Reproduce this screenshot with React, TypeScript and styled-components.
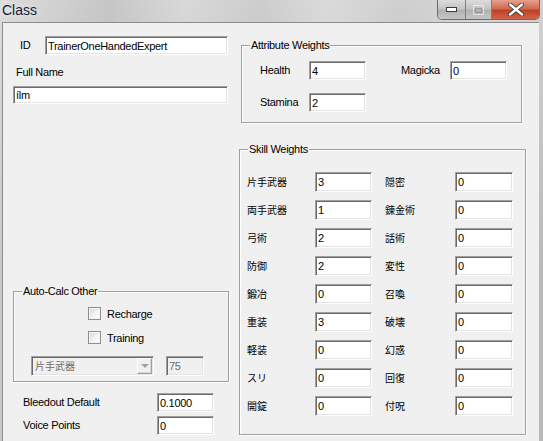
import { Fragment } from 'react'
import styled, { createGlobalStyle } from 'styled-components'

const GlobalStyle = createGlobalStyle`
  html, body {
    margin: 0;
    padding: 0;
    overflow: hidden;
    background: #f0f0f0;
  }
  body {
    font-family: 'Liberation Sans', 'Noto Sans CJK JP', sans-serif;
    font-size: 11px;
    color: #000;
  }
`

const Window = styled.div`
  width: 543px;
  height: 441px;
  display: flex;
  flex-direction: column;
  overflow: hidden;
  background:
    linear-gradient(180deg, rgba(255, 255, 255, 0.35) 0%, rgba(255, 255, 255, 0) 60%),
    linear-gradient(
      90deg,
      #c9c9c9 0%,
      #bdbdbd 8%,
      #a9a9a9 20%,
      #c4c4c4 34%,
      #b3b3b3 48%,
      #c7c7c7 60%,
      #b6b6b6 74%,
      #c2c2c2 88%,
      #b9b9b9 100%
    );
`

const TitleBar = styled.div`
  height: 22px;
  display: flex;
  justify-content: space-between;
  align-items: flex-start;
`

const Title = styled.div`
  padding: 2px 0 0 2px;
  font-size: 14px;
  line-height: 17px;
  color: #10203a;
  text-shadow: 0 0 6px rgba(255, 255, 255, 0.9);
`

const Controls = styled.div`
  display: flex;
  margin-right: 3px;
  height: 19px;
  border: 1px solid #6a6a6a;
  border-top: none;
  border-radius: 0 0 5px 5px;
  overflow: hidden;
`

const CtrlButton = styled.div<{ $w: number; $close?: boolean }>`
  width: ${({ $w }) => $w}px;
  display: flex;
  align-items: center;
  justify-content: center;
  background: ${({ $close }) =>
    $close
      ? 'linear-gradient(180deg, #e6a08e 0%, #d06a53 45%, #bf4029 55%, #cf6448 100%)'
      : 'linear-gradient(180deg, #dcdcdc 0%, #c4c4c4 45%, #b0b0b0 55%, #c6c6c6 100%)'};

  & + & {
    border-left: 1px solid #7e7e7e;
  }
`

const Body = styled.div`
  flex: 1;
  display: flex;
  padding: 0 4px 0 2px;
  min-height: 0;
`

const Client = styled.div`
  flex: 1;
  display: flex;
  background: #f0f0f0;
  border-top: 1px solid #8c8c8c;
  border-left: 1px solid #8c8c8c;
`

const LeftPane = styled.div`
  width: 235px;
  display: flex;
  flex-direction: column;
  padding: 13px 0 6px;
  box-sizing: border-box;
`

const RightPane = styled.div`
  flex: 1;
  display: flex;
  flex-direction: column;
  padding-top: 22px;
`

const Row = styled.div<{ $pl?: number; $mt?: number; $gap?: number; $push?: boolean }>`
  display: flex;
  align-items: center;
  padding-left: ${({ $pl }) => $pl ?? 0}px;
  margin-top: ${({ $mt, $push }) => ($push ? 'auto' : `${$mt ?? 0}px`)};
  gap: ${({ $gap }) => $gap ?? 0}px;
`

const Label = styled.span<{ $w?: number; $cjk?: boolean }>`
  display: inline-block;
  width: ${({ $w }) => ($w ? `${$w}px` : 'auto')};
  flex-shrink: 0;
  font-size: ${({ $cjk }) => ($cjk ? '10px' : '11px')};
  letter-spacing: ${({ $cjk }) => ($cjk ? '0' : '-0.3px')};
  line-height: 13px;
  white-space: nowrap;
`

const Field = styled.input<{ $w: number; $h?: number; $off?: boolean }>`
  width: ${({ $w }) => $w}px;
  height: ${({ $h }) => $h ?? 19}px;
  box-sizing: border-box;
  margin: 0;
  padding: 0 0 0 2px;
  font-family: 'Liberation Sans', 'Noto Sans CJK JP', sans-serif;
  font-size: 11px;
  letter-spacing: -0.3px;
  color: ${({ $off }) => ($off ? '#6d6d6d' : '#000')};
  -webkit-text-fill-color: ${({ $off }) => ($off ? '#6d6d6d' : '#000')};
  background: ${({ $off }) => ($off ? '#f0f0f0' : '#fff')};
  border: 1px solid;
  border-color: #a0a0a0 #fff #fff #a0a0a0;
  box-shadow: inset 1px 1px 0 #696969, inset -1px -1px 0 #e3e3e3;
  outline: none;
  flex-shrink: 0;
`

const GroupBox = styled.div<{ $w: number; $h: number; $ml?: number }>`
  position: relative;
  width: ${({ $w }) => $w}px;
  height: ${({ $h }) => $h}px;
  margin-left: ${({ $ml }) => $ml ?? 0}px;
  box-sizing: border-box;
  border: 1px solid #a0a0a0;
  box-shadow: inset 1px 1px 0 #fff, 1px 1px 0 #fff;
`

const Caption = styled.span`
  position: absolute;
  top: -7px;
  left: 8px;
  padding: 0 1px;
  background: #f0f0f0;
  font-size: 11px;
  letter-spacing: -0.3px;
  line-height: 13px;
`

const AttrGrid = styled.div`
  display: grid;
  grid-template-columns: 106px 106px;
  column-gap: 35px;
  row-gap: 13px;
  padding: 15px 0 0 18px;
`

const SkillGrid = styled.div`
  display: grid;
  grid-template-columns: 125px 128px;
  column-gap: 13px;
  row-gap: 8px;
  padding: 22px 0 0 7px;
`

const CheckRow = styled.label`
  display: flex;
  align-items: center;
  gap: 6px;
  padding-left: 74px;
  height: 13px;
  font-size: 11px;
  letter-spacing: -0.3px;
`

const CheckBox = styled.span`
  width: 13px;
  height: 13px;
  box-sizing: border-box;
  border: 1px solid #8e8f8f;
  background: linear-gradient(135deg, #d6d6d6 0%, #f4f4f4 60%, #fff 100%);
  box-shadow: inset 0 0 0 1px #f4f4f4;
`

const AutoCalcBody = styled.div`
  display: flex;
  flex-direction: column;
  gap: 11px;
  padding-top: 15px;
`

const ComboBox = styled.div`
  width: 123px;
  height: 20px;
  box-sizing: border-box;
  display: flex;
  align-items: center;
  justify-content: space-between;
  border: 1px solid;
  border-color: #a0a0a0 #fff #fff #a0a0a0;
  box-shadow: inset 1px 1px 0 #696969, inset -1px -1px 0 #e3e3e3;
  background: #f0f0f0;
  padding: 1px;
`

const ComboText = styled.span`
  padding-left: 2px;
  font-size: 10px;
  line-height: 13px;
  color: #6d6d6d;
`

const ComboArrow = styled.span`
  width: 15px;
  height: 16px;
  box-sizing: border-box;
  display: flex;
  align-items: center;
  justify-content: center;
  background: #f0f0f0;
  border: 1px solid;
  border-color: #fff #a0a0a0 #a0a0a0 #fff;
  box-shadow: inset -1px -1px 0 #d6d6d6;

  &::after {
    content: '';
    border-left: 4px solid transparent;
    border-right: 4px solid transparent;
    border-top: 4px solid #a0a0a0;
  }
`

const Glyph = styled.svg`
  display: block;
`

const skills: [string, string, string, string][] = [
  ['片手武器', '3', '隠密', '0'],
  ['両手武器', '1', '錬金術', '0'],
  ['弓術', '2', '話術', '0'],
  ['防御', '2', '変性', '0'],
  ['鍛冶', '0', '召喚', '0'],
  ['重装', '3', '破壊', '0'],
  ['軽装', '0', '幻惑', '0'],
  ['スリ', '0', '回復', '0'],
  ['開錠', '0', '付呪', '0'],
]

export default function App() {
  return (
    <>
      <GlobalStyle />
      <Window>
        <TitleBar>
          <Title>Class</Title>
          <Controls>
            <CtrlButton $w={27}>
              <Glyph width="11" height="5" viewBox="0 0 11 5">
                <rect x="0.5" y="0.5" width="10" height="4" fill="#fff" stroke="#3c3c3c" />
              </Glyph>
            </CtrlButton>
            <CtrlButton $w={25}>
              <Glyph width="11" height="10" viewBox="0 0 11 10" opacity="0.55">
                <rect x="0.5" y="0.5" width="10" height="9" fill="none" stroke="#fff" />
                <rect x="2.5" y="3.5" width="6" height="4" fill="none" stroke="#7a7a7a" />
              </Glyph>
            </CtrlButton>
            <CtrlButton $w={47} $close>
              <Glyph width="16" height="13" viewBox="0 0 16 13">
                <path
                  d="M2 1.5 L14 11.5 M14 1.5 L2 11.5"
                  stroke="#3a3a3a"
                  strokeWidth="4.2"
                  strokeLinecap="round"
                />
                <path
                  d="M2 1.5 L14 11.5 M14 1.5 L2 11.5"
                  stroke="#fff"
                  strokeWidth="2.4"
                  strokeLinecap="round"
                />
              </Glyph>
            </CtrlButton>
          </Controls>
        </TitleBar>

        <Body>
          <Client>
            <LeftPane>
              <Row $pl={17}>
                <Label $w={25}>ID</Label>
                <Field $w={183} defaultValue="TrainerOneHandedExpert" />
              </Row>
              <Row $pl={13} $mt={11}>
                <Label>Full Name</Label>
              </Row>
              <Row $pl={10} $mt={7}>
                <Field $w={215} $h={18} defaultValue="ílm" />
              </Row>

              <Row $pl={10} $push>
                <GroupBox $w={216} $h={91}>
                  <Caption>Auto-Calc Other</Caption>
                  <AutoCalcBody>
                    <CheckRow>
                      <CheckBox />
                      Recharge
                    </CheckRow>
                    <CheckRow>
                      <CheckBox />
                      Training
                    </CheckRow>
                    <Row $pl={17} $mt={1} $gap={12}>
                      <ComboBox>
                        <ComboText>片手武器</ComboText>
                        <ComboArrow />
                      </ComboBox>
                      <Field $w={38} $h={20} $off disabled defaultValue="75" />
                    </Row>
                  </AutoCalcBody>
                </GroupBox>
              </Row>

              <Row $pl={20} $mt={11}>
                <Label $w={134}>Bleedout Default</Label>
                <Field $w={57} defaultValue="0.1000" />
              </Row>
              <Row $pl={20} $mt={4}>
                <Label $w={134}>Voice Points</Label>
                <Field $w={57} defaultValue="0" />
              </Row>
            </LeftPane>

            <RightPane>
              <GroupBox $w={281} $h={78} $ml={3}>
                <Caption>Attribute Weights</Caption>
                <AttrGrid>
                  <Row>
                    <Label $w={49}>Health</Label>
                    <Field $w={57} defaultValue="4" />
                  </Row>
                  <Row>
                    <Label $w={49}>Magicka</Label>
                    <Field $w={57} defaultValue="0" />
                  </Row>
                  <Row>
                    <Label $w={49}>Stamina</Label>
                    <Field $w={57} defaultValue="2" />
                  </Row>
                </AttrGrid>
              </GroupBox>

              <Row $mt={26} $pl={1}>
                <GroupBox $w={287} $h={286}>
                  <Caption>Skill Weights</Caption>
                  <SkillGrid>
                    {skills.map(([left, leftValue, right, rightValue]) => (
                      <Fragment key={left}>
                        <Row>
                          <Label $w={68} $cjk>
                            {left}
                          </Label>
                          <Field $w={57} $h={20} defaultValue={leftValue} />
                        </Row>
                        <Row>
                          <Label $w={70} $cjk>
                            {right}
                          </Label>
                          <Field $w={58} $h={20} defaultValue={rightValue} />
                        </Row>
                      </Fragment>
                    ))}
                  </SkillGrid>
                </GroupBox>
              </Row>
            </RightPane>
          </Client>
        </Body>
      </Window>
    </>
  )
}
